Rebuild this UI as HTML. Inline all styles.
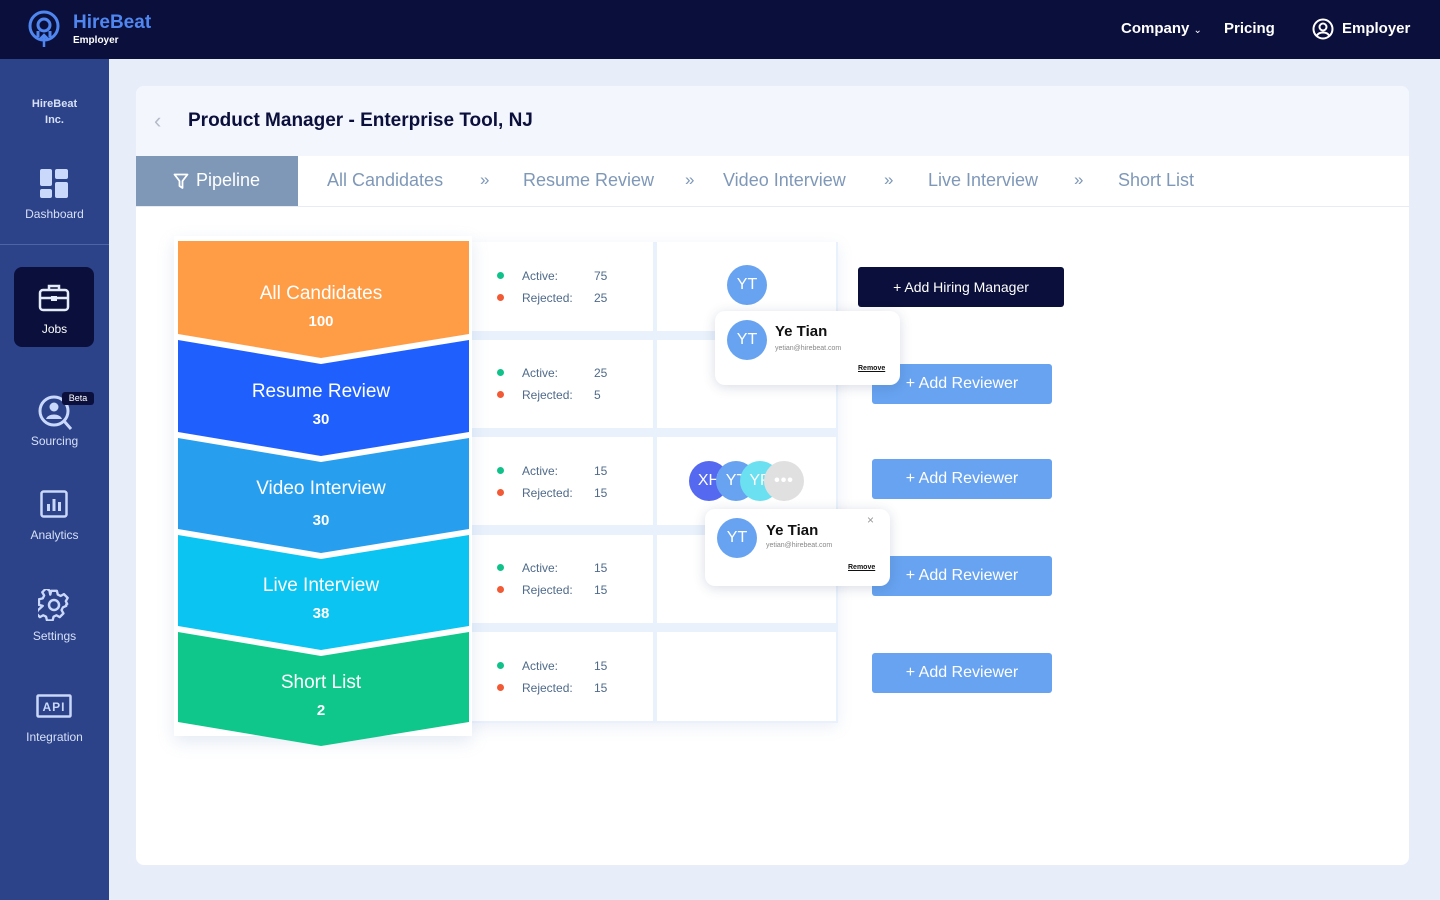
<!DOCTYPE html>
<html><head><meta charset="utf-8"><style>
*{margin:0;padding:0;box-sizing:border-box}
body{width:1440px;height:900px;overflow:hidden;background:#e8eef9;font-family:"Liberation Sans",sans-serif;position:relative}
.abs{position:absolute}
.top{left:0;top:0;width:1440px;height:59px;background:#0b0f3b}
.side{left:0;top:59px;width:109px;height:841px;background:#2c4289}
.sitem{position:absolute;left:0;width:109px;text-align:center;color:#d6e0f7;font-size:12px}
.panel{left:136px;top:86px;width:1273px;height:779px;background:#fff;border-radius:8px;overflow:hidden}
.tabs{position:absolute;top:70px;left:0;width:1273px;height:51px;background:#fff;border-bottom:1px solid #e6ecf6}
.tab{position:absolute;top:14px;color:#7f98b8;font-size:18px}
.chev{position:absolute;top:14px;color:#7f98b8;font-size:17px}
.card{position:absolute;background:#fff}
.stat{position:absolute;font-size:12px;color:#4f6a8a}
.dot{position:absolute;width:7px;height:7px;border-radius:50%}
.btn{position:absolute;width:180px;height:40px;background:#67a3f0;color:#fff;font-size:16px;text-align:center;line-height:40px;border-radius:3px}
.av{position:absolute;width:40px;height:40px;border-radius:50%;background:#67a3f0;color:#fff;font-size:16px;text-align:center;line-height:40px}
.pop{position:absolute;background:#fff;border-radius:10px;box-shadow:0 2px 12px rgba(40,60,110,.18)}
</style></head><body>
<div class="abs top">
  <svg class="abs" style="left:26px;top:9px" width="36" height="40" viewBox="0 0 36 40"><circle cx="18" cy="17" r="14" fill="none" stroke="#4f86f0" stroke-width="3"/><circle cx="18" cy="16" r="6" fill="none" stroke="#4f86f0" stroke-width="3"/><path d="M12 28 L12 22 M24 28 L24 22" stroke="#4f86f0" stroke-width="3"/><path d="M18 38 V26 M14 30 L18 26 L22 30" stroke="#4f86f0" stroke-width="2.5" fill="none"/></svg>
  <div class="abs" style="left:73px;top:12px;color:#4f86f0;font-size:19px;font-weight:bold">HireBeat</div>
  <div class="abs" style="left:73px;top:35px;color:#fff;font-size:10px;font-weight:bold">Employer</div>
  <div class="abs" style="left:1121px;top:20px;color:#fff;font-size:15px;font-weight:bold">Company <span style="font-size:10px;font-weight:normal">⌄</span></div>
  <div class="abs" style="left:1224px;top:20px;color:#fff;font-size:15px;font-weight:bold">Pricing</div>
  <svg class="abs" style="left:1312px;top:18px" width="22" height="22" viewBox="0 0 22 22"><circle cx="11" cy="11" r="9.5" fill="none" stroke="#fff" stroke-width="2"/><circle cx="11" cy="9" r="3.5" fill="none" stroke="#fff" stroke-width="2"/><path d="M5 17.5 C7 13.5 15 13.5 17 17.5" fill="none" stroke="#fff" stroke-width="2"/></svg>
  <div class="abs" style="left:1342px;top:20px;color:#fff;font-size:15px;font-weight:bold">Employer</div>
</div>
<div class="abs side">
  <div class="sitem" style="top:37px;font-weight:bold;line-height:16px;font-size:11px">HireBeat<br>Inc.</div>
  <svg class="abs" style="left:40px;top:110px" width="28" height="29"><rect x="0" y="0" width="12" height="17" rx="2" fill="#c9d8fb"/><rect x="15" y="0" width="13" height="10" rx="2" fill="#c9d8fb"/><rect x="0" y="20" width="12" height="9" rx="2" fill="#c9d8fb"/><rect x="15" y="13" width="13" height="16" rx="2" fill="#c9d8fb"/></svg>
  <div class="sitem" style="top:148px">Dashboard</div>
  <div class="abs" style="left:0;top:185px;width:109px;height:1px;background:#4d64a6"></div>
  <div class="abs" style="left:14px;top:208px;width:80px;height:80px;border-radius:8px;background:#0b0f3b"></div>
  <svg class="abs" style="left:38px;top:224px" width="32" height="30" viewBox="0 0 32 30"><rect x="2" y="7" width="28" height="20" rx="3" fill="none" stroke="#e4ebfb" stroke-width="2.5"/><path d="M11 7V3h10v4M2 15h28" stroke="#e4ebfb" stroke-width="2.5" fill="none"/><rect x="13" y="13" width="6" height="5" fill="#e4ebfb"/></svg>
  <div class="sitem" style="top:263px;color:#fff">Jobs</div>
  <svg class="abs" style="left:38px;top:333px" width="36" height="40" viewBox="0 0 36 40"><circle cx="16" cy="19" r="14" fill="none" stroke="#c9d8fb" stroke-width="3"/><circle cx="16" cy="15" r="4.5" fill="#c9d8fb"/><path d="M8 27c2-6 14-6 16 0z" fill="#c9d8fb"/><path d="M26 29l7 8" stroke="#c9d8fb" stroke-width="3"/></svg>
  <div class="abs" style="left:62px;top:333px;width:32px;height:13px;background:#0b0f3b;color:#fff;font-size:9px;text-align:center;line-height:13px;border-radius:3px">Beta</div>
  <div class="sitem" style="top:375px">Sourcing</div>
  <svg class="abs" style="left:40px;top:431px" width="28" height="28"><rect x="1.5" y="1.5" width="25" height="25" rx="2" fill="none" stroke="#c9d8fb" stroke-width="2.5"/><rect x="7" y="14" width="3" height="7" fill="#c9d8fb"/><rect x="12.5" y="9" width="3" height="12" fill="#c9d8fb"/><rect x="18" y="12" width="3" height="9" fill="#c9d8fb"/></svg>
  <div class="sitem" style="top:469px">Analytics</div>
  <svg class="abs" style="left:38px;top:530px" width="32" height="32" viewBox="0 0 32 32"><path d="M13 3h6l1 4 3 1.5 3.5-2 4 4-2 3.5L30 17l-1 .5V19l-3.5 1.5-1.5 3 2 3.5-4 4-3.5-2-3 1.5-1 4h-6l-1-4-3-1.5-3.5 2-4-4 2-3.5L4 19l-4-1v-6l4-1 1.5-3-2-3.5 4-4 3.5 2L12 7z" transform="translate(1 -1) scale(.94)" fill="none" stroke="#c9d8fb" stroke-width="2.5" stroke-linejoin="round"/><circle cx="16" cy="16" r="5" fill="none" stroke="#c9d8fb" stroke-width="2.5"/></svg>
  <div class="sitem" style="top:570px">Settings</div>
  <svg class="abs" style="left:36px;top:635px" width="36" height="24"><rect x="1.5" y="1.5" width="33" height="21" rx="1" fill="none" stroke="#c9d8fb" stroke-width="2.5"/><text x="18" y="17" text-anchor="middle" font-family="Liberation Sans" font-weight="bold" font-size="12" fill="#c9d8fb" letter-spacing="1">API</text></svg>
  <div class="sitem" style="top:671px">Integration</div>
</div>
<div class="abs panel">
  <div class="abs" style="left:0;top:0;width:1273px;height:70px;background:#f3f6fd"></div>
  <div class="abs" style="left:18px;top:22px;color:#b4bcc8;font-size:22px">‹</div>
  <div class="abs" style="left:52px;top:24px;color:#0b0f3b;font-size:19px;font-weight:bold">Product Manager - Enterprise Tool, NJ</div>
  <div class="tabs">
    <div class="abs" style="left:0;top:0;width:162px;height:50px;background:#7f98b8"></div>
    <svg class="abs" style="left:37px;top:17px" width="16" height="17"><path d="M1.5 1.5h13l-5 6.5v7l-3-2v-5z" fill="none" stroke="#fff" stroke-width="1.8" stroke-linejoin="round"/></svg>
    <div class="tab" style="left:60px;color:#fff">Pipeline</div>
    <div class="tab" style="left:191px">All Candidates</div><div class="chev" style="left:344px">»</div>
    <div class="tab" style="left:387px">Resume Review</div><div class="chev" style="left:549px">»</div>
    <div class="tab" style="left:587px">Video Interview</div><div class="chev" style="left:748px">»</div>
    <div class="tab" style="left:792px">Live Interview</div><div class="chev" style="left:938px">»</div>
    <div class="tab" style="left:982px">Short List</div>
  </div>
</div>
<!-- stats grid -->
<div class="abs" style="left:469px;top:242px;width:369px;height:481px;background:#e9f1fc;box-shadow:0 4px 14px rgba(120,150,200,.15)"></div>
<div class="card" style="left:471px;top:242px;width:182px;height:89px"></div><div class="card" style="left:657px;top:242px;width:179px;height:89px"></div>
<div class="card" style="left:471px;top:340px;width:182px;height:88px"></div><div class="card" style="left:657px;top:340px;width:179px;height:88px"></div>
<div class="card" style="left:471px;top:437px;width:182px;height:88px"></div><div class="card" style="left:657px;top:437px;width:179px;height:88px"></div>
<div class="card" style="left:471px;top:535px;width:182px;height:88px"></div><div class="card" style="left:657px;top:535px;width:179px;height:88px"></div>
<div class="card" style="left:471px;top:632px;width:182px;height:89px"></div><div class="card" style="left:657px;top:632px;width:179px;height:89px"></div>

<div class="dot" style="left:497px;top:272px;background:#10c28a"></div><div class="stat" style="left:522px;top:269px">Active:</div><div class="stat" style="left:594px;top:269px">75</div>
<div class="dot" style="left:497px;top:294px;background:#f25a35"></div><div class="stat" style="left:522px;top:291px">Rejected:</div><div class="stat" style="left:594px;top:291px">25</div>
<div class="dot" style="left:497px;top:369px;background:#10c28a"></div><div class="stat" style="left:522px;top:366px">Active:</div><div class="stat" style="left:594px;top:366px">25</div>
<div class="dot" style="left:497px;top:391px;background:#f25a35"></div><div class="stat" style="left:522px;top:388px">Rejected:</div><div class="stat" style="left:594px;top:388px">5</div>
<div class="dot" style="left:497px;top:467px;background:#10c28a"></div><div class="stat" style="left:522px;top:464px">Active:</div><div class="stat" style="left:594px;top:464px">15</div>
<div class="dot" style="left:497px;top:489px;background:#f25a35"></div><div class="stat" style="left:522px;top:486px">Rejected:</div><div class="stat" style="left:594px;top:486px">15</div>
<div class="dot" style="left:497px;top:564px;background:#10c28a"></div><div class="stat" style="left:522px;top:561px">Active:</div><div class="stat" style="left:594px;top:561px">15</div>
<div class="dot" style="left:497px;top:586px;background:#f25a35"></div><div class="stat" style="left:522px;top:583px">Rejected:</div><div class="stat" style="left:594px;top:583px">15</div>
<div class="dot" style="left:497px;top:662px;background:#10c28a"></div><div class="stat" style="left:522px;top:659px">Active:</div><div class="stat" style="left:594px;top:659px">15</div>
<div class="dot" style="left:497px;top:684px;background:#f25a35"></div><div class="stat" style="left:522px;top:681px">Rejected:</div><div class="stat" style="left:594px;top:681px">15</div>

<!-- funnel -->
<div class="abs" style="left:174px;top:236px;width:298px;height:500px;background:#fff;box-shadow:0 6px 16px rgba(120,150,200,.2)"></div>
<svg class="abs" style="left:0;top:0" width="1440" height="900">
  <polygon points="178,241 469,241 469,334 321,358 178,334" fill="#ff9d47"/>
  <polygon points="178,340 321,364 469,340 469,432 321,456 178,432" fill="#1f5ffe"/>
  <polygon points="178,438 321,462 469,438 469,529 321,553 178,529" fill="#279fee"/>
  <polygon points="178,535 321,559 469,535 469,626 321,650 178,626" fill="#0bc4f1"/>
  <polygon points="178,632 321,656 469,632 469,722 321,746 178,722" fill="#0fc78a"/>
  <g fill="#fff" font-family="Liberation Sans" text-anchor="middle">
    <text x="321" y="299" font-size="19">All Candidates</text><text x="321" y="326" font-size="15" font-weight="bold">100</text>
    <text x="321" y="397" font-size="19">Resume Review</text><text x="321" y="424" font-size="15" font-weight="bold">30</text>
    <text x="321" y="494" font-size="19">Video Interview</text><text x="321" y="525" font-size="15" font-weight="bold">30</text>
    <text x="321" y="591" font-size="19">Live Interview</text><text x="321" y="618" font-size="15" font-weight="bold">38</text>
    <text x="321" y="688" font-size="19">Short List</text><text x="321" y="715" font-size="15" font-weight="bold">2</text>
  </g>
</svg>

<div class="av" style="left:727px;top:265px">YT</div>
<div class="av" style="left:689px;top:461px;background:#5468f0;overflow:hidden">XH</div>
<div class="av" style="left:716px;top:461px;overflow:hidden">YT</div>
<div class="av" style="left:740px;top:461px;background:#6ae0f0;overflow:hidden">YP</div>
<div class="av" style="left:764px;top:461px;background:#e0e0e0;font-weight:bold;letter-spacing:1px">•••</div>

<div class="abs" style="left:858px;top:267px;width:206px;height:40px;background:#0b0f3b;border-radius:3px;color:#fff;font-size:14px;text-align:center;line-height:40px">+ Add Hiring Manager</div>
<div class="btn" style="left:872px;top:364px">+ Add Reviewer</div>
<div class="btn" style="left:872px;top:459px">+ Add Reviewer</div>
<div class="btn" style="left:872px;top:556px">+ Add Reviewer</div>
<div class="btn" style="left:872px;top:653px">+ Add Reviewer</div>

<div class="pop" style="left:715px;top:311px;width:185px;height:74px">
  <div class="av" style="left:12px;top:9px">YT</div>
  <div class="abs" style="left:60px;top:12px;font-size:15px;font-weight:bold;color:#111">Ye Tian</div>
  <div class="abs" style="left:60px;top:34px;font-size:7px;color:#888">yetian@hirebeat.com</div>
  <div class="abs" style="left:143px;top:54px;font-size:7px;color:#111;text-decoration:underline;font-weight:bold">Remove</div>
</div>
<div class="pop" style="left:705px;top:509px;width:185px;height:77px">
  <div class="av" style="left:12px;top:9px">YT</div>
  <div class="abs" style="left:61px;top:13px;font-size:15px;font-weight:bold;color:#111">Ye Tian</div>
  <div class="abs" style="left:61px;top:33px;font-size:7px;color:#888">yetian@hirebeat.com</div>
  <div class="abs" style="left:162px;top:4px;font-size:12px;color:#999">×</div>
  <div class="abs" style="left:143px;top:55px;font-size:7px;color:#111;text-decoration:underline;font-weight:bold">Remove</div>
</div>
</body></html>
